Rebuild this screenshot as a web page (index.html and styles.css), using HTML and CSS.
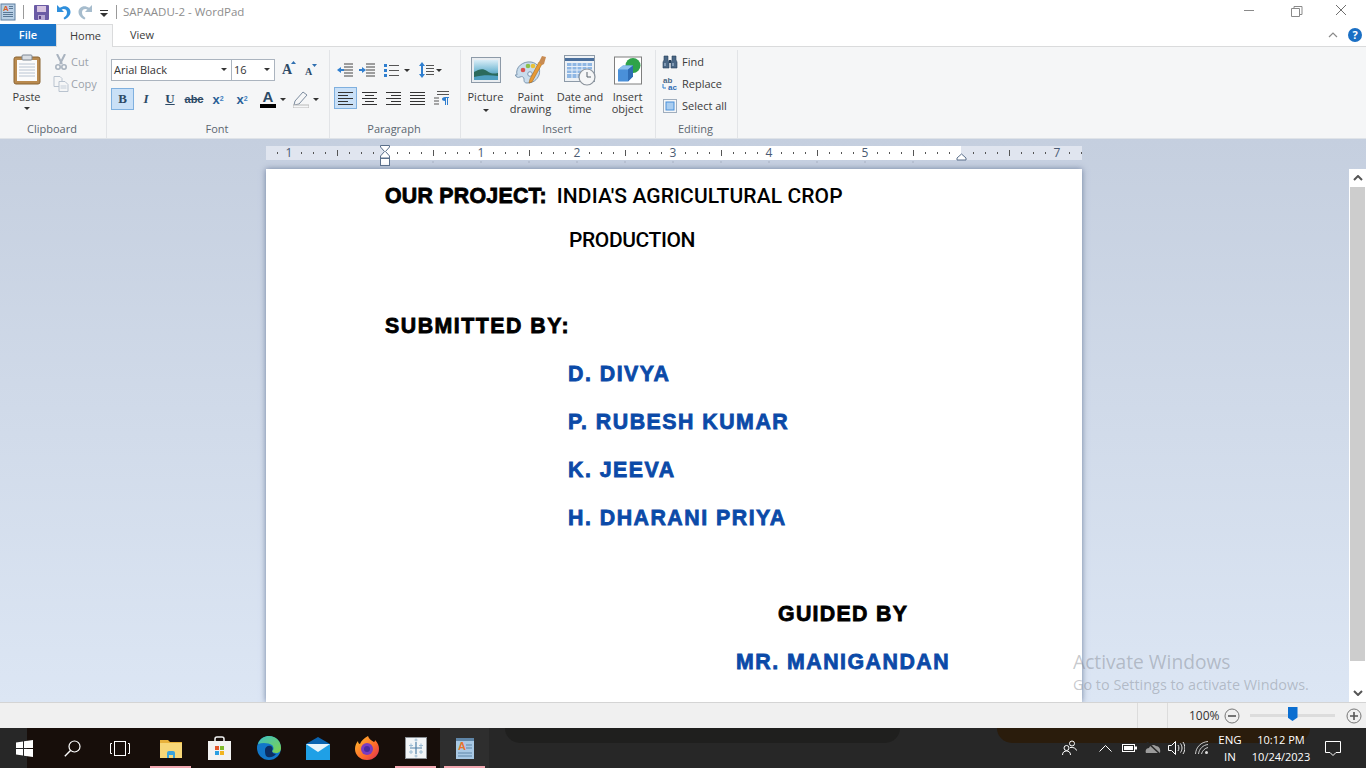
FILE: index.html
```html
<!DOCTYPE html>
<html lang="en">

<head>
    <meta charset="UTF-8">
    <meta name="viewport" content="width=device-width, initial-scale=1.0">
    <title>SAPAADU-2 - WordPad</title>
    <link rel="stylesheet" href="styles.css">
</head>

<body>
    <div class="app">
        <!-- title bar -->
        <header class="titlebar">
            <svg class="qa qa-app" width="16" height="18" viewBox="0 0 16 18">
                <rect x="1" y="1" width="14" height="16" fill="#b9d0e6" stroke="#5f7f9f"/>
                <rect x="3" y="9" width="10" height="1" fill="#5a7896"/>
                <rect x="3" y="11" width="10" height="1" fill="#5a7896"/>
                <rect x="3" y="13" width="10" height="1" fill="#5a7896"/>
                <text x="3" y="8" font-size="8" font-weight="700" fill="#d9622b" font-family="Liberation Sans">A</text>
                <rect x="9" y="3" width="4" height="1" fill="#5a7896"/>
                <rect x="9" y="5" width="4" height="1" fill="#5a7896"/>
            </svg>
            <span class="qa-sep qa-sep-first"></span>
            <svg class="qa qa-save" width="15" height="15" viewBox="0 0 15 15">
                <rect x="0" y="0" width="15" height="15" rx="1" fill="#6b5ba5"/>
                <rect x="3" y="1" width="9" height="6" fill="#d6c3e0"/>
                <rect x="4" y="10" width="7" height="5" fill="#b5a7d3"/>
                <rect x="5" y="11" width="2" height="3" fill="#5a4388"/>
            </svg>
            <svg class="qa qa-undo" width="15" height="16" viewBox="0 0 15 16">
                <path d="M1 1v7h7L5.600 5.600C7.800 4.300 11 5.300 11 8.500c0 2.500-1.500 4-3.500 5.500l1 1.500c3-1.500 6-4 6-7.500C14.500 3 9 .2 3.800 3.800z" fill="#2f8fdc"/>
            </svg>
            <svg class="qa qa-redo" width="15" height="16" viewBox="0 0 15 16">
                <path d="M14 1v7H7l2.400-2.400C7.200 4.300 4 5.300 4 8.500c0 2.500 1.500 4 3.500 5.500l-1 1.500c-3-1.500-6-4-6-7.500C.5 3 6 .2 11.200 3.800z" fill="#a6bccd"/>
            </svg>
            <svg class="qa qa-more" width="8" height="7" viewBox="0 0 8 7">
                <rect x="0" y="0" width="8" height="1" fill="#333"/>
                <path d="M0 3h8L4 7z" fill="#333"/>
            </svg>
            <span class="qa-sep qa-sep-last"></span>
            <span class="doc-title">SAPAADU-2 - WordPad</span>
            <div class="win-controls">
                <svg width="46" height="24" viewBox="0 0 46 24"><rect x="18" y="10" width="10" height="1" fill="#8a8a8a"/></svg>
                <svg width="46" height="24" viewBox="0 0 46 24"><path d="M19.500 8.500h8v8h-8zM22 8.500V6.500h8v8h-2.500" fill="none" stroke="#8a8a8a"/></svg>
                <svg width="46" height="24" viewBox="0 0 46 24"><path d="M18 5l10 10M28 5L18 15" stroke="#6f6f6f" fill="none"/></svg>
            </div>
        </header>

        <!-- tabs -->
        <nav class="tabs">
            <span class="tab tab-file">File</span>
            <span class="tab tab-home">Home</span>
            <span class="tab tab-view">View</span>
            <svg class="ribbon-collapse" width="10" height="6" viewBox="0 0 10 6"><path d="M1 5l4-4 4 4" fill="none" stroke="#8a8a8a" stroke-width="1.200"/></svg>
            <span class="help-btn">?</span>
        </nav>

        <!-- ribbon -->
        <section class="ribbon">
            <div class="group group-clipboard">
                <div class="group-body clipboard-body">
                    <div class="paste">
                        <svg width="28" height="31" viewBox="0 0 28 31">
                            <rect x="1" y="3" width="26" height="27" rx="2" fill="#b98a4f" stroke="#8a6433"/>
                            <rect x="4" y="6" width="20" height="21" fill="#fbfbfb"/>
                            <path d="M6 10h16M6 13h16M6 16h16M6 19h16M6 22h16" stroke="#b9c4d2"/>
                            <rect x="9" y="1" width="10" height="5" rx="1" fill="#d9dde2" stroke="#7d8793"/>
                        </svg>
                        <span class="paste-label">Paste</span>
                        <span class="caret"></span>
                    </div>
                    <div class="small-col">
                        <div class="small-row is-off">
                            <svg width="12" height="16" viewBox="0 0 12 16">
                                <path d="M2 0l5 10M10 0L5 10" stroke="#a9b3bf" stroke-width="2" fill="none"/>
                                <circle cx="3" cy="13" r="2.200" fill="none" stroke="#a9b3bf" stroke-width="1.600"/>
                                <circle cx="9" cy="13" r="2.200" fill="none" stroke="#a9b3bf" stroke-width="1.600"/>
                            </svg>
                            <span>Cut</span>
                        </div>
                        <div class="small-row is-off">
                            <svg width="15" height="16" viewBox="0 0 15 16">
                                <path d="M.5.500h6l2 2v8h-8z" fill="#f5f6f7" stroke="#b9c3cf"/>
                                <path d="M5.500 5.500h6l3 3v7h-9z" fill="#f5f6f7" stroke="#b9c3cf"/>
                                <path d="M7 10h6M7 12h6" stroke="#c5ced8"/>
                            </svg>
                            <span>Copy</span>
                        </div>
                    </div>
                </div>
                <div class="group-label">Clipboard</div>
            </div>

            <div class="group group-font">
                <div class="group-body font-body">
                    <div class="font-row">
                        <div class="combo combo-name"><span>Arial Black</span><span class="caret caret-right"></span></div>
                        <div class="combo combo-size"><span>16</span><span class="caret caret-right"></span></div>
                        <svg class="grow" width="17" height="20" viewBox="0 0 17 20">
                            <text x="1" y="16" font-size="14" font-weight="700" fill="#2d4a66" font-family="Liberation Serif">A</text>
                            <path d="M10 6l2.500-3 2.500 3z" fill="#2f6fb0"/>
                        </svg>
                        <svg class="shrink" width="14" height="18" viewBox="0 0 14 18">
                            <text x="1" y="15" font-size="10" font-weight="700" fill="#2d4a66" font-family="Liberation Serif">A</text>
                            <path d="M8 4h5l-2.500 3z" fill="#2f6fb0"/>
                        </svg>
                    </div>
                    <div class="font-row font-tools">
                        <span class="tool tool-first is-active fmt fmt-b">B</span>
                        <span class="tool fmt fmt-i">I</span>
                        <span class="tool fmt fmt-u">U</span>
                        <span class="tool fmt fmt-s">abc</span>
                        <span class="tool fmt fmt-sub">x<sub>2</sub></span>
                        <span class="tool fmt fmt-sup">x<sup>2</sup></span>
                        <span class="color-a"><span class="color-a-letter">A</span><span class="color-a-bar"></span></span>
                        <span class="caret caret-a"></span>
                        <svg class="pencil" width="16" height="17" viewBox="0 0 16 17">
                            <path d="M2 10l8-9 4 3-8 9-5 1z" fill="#f5f6f7" stroke="#7d8da0"/>
                            <rect x="0" y="14" width="16" height="3" fill="#f5f6f7" stroke="#b9b9b9"/>
                        </svg>
                        <span class="caret caret-h"></span>
                    </div>
                </div>
                <div class="group-label">Font</div>
            </div>

            <div class="group group-paragraph">
                <div class="group-body para-body">
                    <div class="para-row para-top">
                        <svg class="pi" width="16" height="14" viewBox="0 0 16 14"><path d="M7 1h9M7 4h9M7 7h9M7 10h9M7 13h9" stroke="#444"/><path d="M0 7l4-3v6z" fill="#2f7fd0"/><rect x="3" y="6" width="4" height="2" fill="#2f7fd0"/></svg>
                        <svg class="pi" width="16" height="14" viewBox="0 0 16 14"><path d="M7 1h9M7 4h9M7 7h9M7 10h9M7 13h9" stroke="#444"/><path d="M7 7L3 4v6z" fill="#2f7fd0"/><rect x="0" y="6" width="4" height="2" fill="#2f7fd0"/></svg>
                        <svg class="pi pi-list" width="15" height="13" viewBox="0 0 15 13"><rect y="0" width="3" height="3" fill="#2f7fd0"/><rect y="5" width="3" height="3" fill="#2f7fd0"/><rect y="10" width="3" height="3" fill="#2f7fd0"/><path d="M5 1.500h10M5 6.500h10M5 11.500h10" stroke="#555"/></svg>
                        <span class="caret caret-p1"></span>
                        <svg class="pi pi-space" width="15" height="16" viewBox="0 0 15 16"><path d="M3 0l3 4H0zM3 16l3-4H0z" fill="#2f7fd0"/><rect x="2" y="4" width="2" height="8" fill="#2f7fd0"/><path d="M7 3.500h8M7 6.500h8M7 9.500h8M7 12.500h8" stroke="#555"/></svg>
                        <span class="caret caret-p2"></span>
                    </div>
                    <div class="para-row para-bottom">
                        <span class="tool tool-first is-active"><svg width="15" height="13" viewBox="0 0 15 13"><path d="M0 .5h15M0 3.500h10M0 6.500h15M0 9.500h10M0 12.500h15" stroke="#333"/></svg></span>
                        <span class="tool"><svg width="15" height="13" viewBox="0 0 15 13"><path d="M0 .5h15M3 3.500h9M0 6.500h15M3 9.500h9M0 12.500h15" stroke="#333"/></svg></span>
                        <span class="tool"><svg width="15" height="13" viewBox="0 0 15 13"><path d="M0 .5h15M5 3.500h10M0 6.500h15M5 9.500h10M0 12.500h15" stroke="#333"/></svg></span>
                        <span class="tool"><svg width="15" height="13" viewBox="0 0 15 13"><path d="M0 .5h15M0 3.500h15M0 6.500h15M0 9.500h15M0 12.500h15" stroke="#333"/></svg></span>
                        <span class="tool"><svg width="15" height="14" viewBox="0 0 15 14"><path d="M3 .5h12M3 3.500h12M0 7h5M0 10h5M0 13h5" stroke="#555"/><path d="M7 6h8v1h-1v7h-1V7h-1v7h-1v-4c-2 0-3-1-3-2s1-2 3-2z" fill="#2f7fd0"/></svg></span>
                    </div>
                </div>
                <div class="group-label">Paragraph</div>
            </div>

            <div class="group group-insert">
                <div class="group-body insert-body">
                    <div class="large large-picture">
                        <svg width="30" height="31" viewBox="0 0 30 31">
                            <defs>
                                <linearGradient id="sky" x1="0" y1="0" x2="0" y2="1">
                                    <stop offset="0" stop-color="#d9edf7"/>
                                    <stop offset=".5" stop-color="#7fbfd8"/>
                                    <stop offset="1" stop-color="#2f7f9a"/>
                                </linearGradient>
                            </defs>
                            <rect x=".5" y="2.500" width="29" height="25" fill="#e9edf1" stroke="#8d9aa8"/>
                            <rect x="3" y="5" width="24" height="20" fill="url(#sky)"/>
                            <path d="M3 17c5-3 9-4 13-1s7 3 11 2v7H3z" fill="#2b6a5c"/>
                            <path d="M3 22c8-2 16-2 24-1v4H3z" fill="#4f9fc0"/>
                        </svg>
                        <span>Picture</span>
                        <span class="caret"></span>
                    </div>
                    <div class="large large-paint">
                        <svg width="32" height="31" viewBox="0 0 32 31">
                            <path d="M2 20C0 12 8 6 16 7c7 1 10 7 8 13-2 5-6 8-12 8-3 0-3-2-3-4s-2-3-4-2-4 0-5-2z" fill="#c9dcec" stroke="#7d97b0"/>
                            <circle cx="8" cy="15" r="2.300" fill="#d9534f"/>
                            <circle cx="13" cy="11" r="2.300" fill="#8cc04b"/>
                            <circle cx="18" cy="11" r="2.300" fill="#e8c23a"/>
                            <circle cx="15" cy="19" r="2.300" fill="#eef4fa" stroke="#7d97b0"/>
                            <path d="M14 28l3-1L27 9l-3-2-9 17z" fill="#e79a35" stroke="#a86a1f" stroke-width=".6"/>
                            <path d="M24 7l3-6 4 1-2 7-2 1z" fill="#c88b52"/>
                        </svg>
                        <span>Paint</span>
                        <span>drawing</span>
                    </div>
                    <div class="large large-date">
                        <svg width="32" height="31" viewBox="0 0 32 31">
                            <rect x=".5" y=".5" width="30" height="26" fill="#edf1f5" stroke="#8d9aa8"/>
                            <rect x="1" y="3" width="29" height="3" fill="#4a6f9c"/>
                            <rect x="3" y="8" width="25" height="15" fill="#8fb7e4"/>
                            <path d="M3 11.500h25M3 15h25M3 18.500h25M8 8v15M13 8v15M18 8v15M23 8v15" stroke="#e8f0f9"/>
                            <circle cx="23" cy="22" r="8" fill="#f5f6f7" stroke="#8a929b" stroke-width="1.200"/>
                            <path d="M23 17v5h4" fill="none" stroke="#59626c"/>
                        </svg>
                        <span>Date and</span>
                        <span>time</span>
                    </div>
                    <div class="large large-object">
                        <svg width="30" height="30" viewBox="0 0 30 30">
                            <rect x="1.500" y="1.500" width="27" height="27" fill="#fff" stroke="#7f7f7f"/>
                            <circle cx="20" cy="10" r="7.500" fill="#2fa34a"/>
                            <path d="M5 14l5-4h10v11l-5 5H5z" fill="#4a90d9"/>
                            <path d="M5 14l5-4h10l-5 4z" fill="#8cc0ee"/>
                            <path d="M15 14l5-4v11l-5 5z" fill="#2f6db5"/>
                        </svg>
                        <span>Insert</span>
                        <span>object</span>
                    </div>
                </div>
                <div class="group-label">Insert</div>
            </div>

            <div class="group group-editing">
                <div class="group-body small-col editing-body">
                    <div class="small-row">
                        <svg width="16" height="14" viewBox="0 0 16 14">
                            <path d="M2 1h4v4l1 2v6H1V7l1-2zM10 1h4v4l1 2v6H9V7l1-2z" fill="#4a6785" stroke="#27415c" stroke-width=".6"/>
                            <rect x="7" y="5" width="2" height="3" fill="#27415c"/>
                            <path d="M3 8v3M11 8v3" stroke="#b9cfe4"/>
                        </svg>
                        <span>Find</span>
                    </div>
                    <div class="small-row">
                        <svg class="rep" width="16" height="15" viewBox="0 0 16 15">
                            <text x="1" y="7" font-size="8" font-weight="700" fill="#4a6785" font-family="Liberation Sans">ab</text>
                            <text x="6" y="14" font-size="8" font-weight="700" fill="#2f6db5" font-family="Liberation Sans">ac</text>
                            <path d="M1 8v4h3" fill="none" stroke="#2f7fd0"/>
                        </svg>
                        <span>Replace</span>
                    </div>
                    <div class="small-row">
                        <svg width="14" height="14" viewBox="0 0 14 14">
                            <rect x=".5" y=".5" width="13" height="13" fill="none" stroke="#4a6785" stroke-dasharray="1 1"/>
                            <rect x="3" y="3" width="8" height="8" fill="#a9cdf0" stroke="#4a90d9"/>
                        </svg>
                        <span>Select all</span>
                    </div>
                </div>
                <div class="group-label">Editing</div>
            </div>
        </section>

        <!-- document area -->
        <main class="workspace">
            <div class="ruler">
                <svg width="816" height="14" viewBox="0 0 816 14">
                    <defs>
                        <pattern id="ticks" x="119" y="0" width="96" height="14" patternUnits="userSpaceOnUse">
                            <rect x="12" y="6" width="1" height="2" fill="#555"/>
                            <rect x="24" y="6" width="1" height="2" fill="#555"/>
                            <rect x="36" y="6" width="1" height="2" fill="#555"/>
                            <rect x="48" y="4" width="1" height="6" fill="#555"/>
                            <rect x="60" y="6" width="1" height="2" fill="#555"/>
                            <rect x="72" y="6" width="1" height="2" fill="#555"/>
                            <rect x="84" y="6" width="1" height="2" fill="#555"/>
                        </pattern>
                    </defs>
                    <rect width="816" height="14" fill="#e0e5ef"/>
                    <rect x="119" width="576" height="14" fill="#fff"/>
                    <rect width="816" height="14" fill="url(#ticks)"/>
                    <g class="ruler-num">
                        <text x="23" y="11">1</text>
                        <text x="215" y="11">1</text>
                        <text x="311" y="11">2</text>
                        <text x="407" y="11">3</text>
                        <text x="503" y="11">4</text>
                        <text x="599" y="11">5</text>
                        <text x="791" y="11">7</text>
                    </g>
                    <path d="M167 15v2M215 15v2M263 15v2M311 15v2M359 15v2M407 15v2M455 15v2M503 15v2M551 15v2M599 15v2M647 15v2" stroke="#a8b2c2"/>
                    <path d="M114.500-.5h9v1.500l-4 4.500 4 4.500v2h-9v-2l4-4.500-4-4.500z" fill="#fff" stroke="#5a6f8a"/>
                    <rect x="114.500" y="12.500" width="9" height="7" fill="#fff" stroke="#5a6f8a"/>
                    <path d="M695.500 8l4.500 4v2h-9v-2z" fill="#fff" stroke="#5a6f8a"/>
                </svg>
            </div>
            <div class="page">
                <div class="line line-first"><span class="heavy heavy-tight">OUR PROJECT:</span><span class="din din-first">INDIA'S AGRICULTURAL CROP</span></div>
                <div class="line line-second"><span class="din din-second">PRODUCTION</span></div>
                <div class="line line-submitted heavy">SUBMITTED BY:</div>
                <div class="line name heavy">D. DIVYA</div>
                <div class="line name heavy">P. RUBESH KUMAR</div>
                <div class="line name heavy">K. JEEVA</div>
                <div class="line name heavy">H. DHARANI PRIYA</div>
                <div class="line line-guided heavy">GUIDED BY</div>
                <div class="line line-guide heavy">MR. MANIGANDAN</div>
            </div>
            <aside class="scrollbar">
                <svg class="scroll-arrow" width="10" height="6" viewBox="0 0 10 6"><path d="M1 5l4-4 4 4" fill="none" stroke="#555" stroke-width="2"/></svg>
                <div class="scroll-thumb"></div>
                <svg class="scroll-arrow scroll-down" width="10" height="6" viewBox="0 0 10 6"><path d="M1 1l4 4 4-4" fill="none" stroke="#555" stroke-width="2"/></svg>
            </aside>
            <div class="watermark">
                <div class="wm-title">Activate Windows</div>
                <div class="wm-sub">Go to Settings to activate Windows.</div>
            </div>
        </main>

        <!-- status bar -->
        <footer class="statusbar">
            <span class="status-sep"></span>
            <span class="status-sep status-sep-2"></span>
            <span class="zoom-value">100%</span>
            <svg class="zoom-btn" width="16" height="16" viewBox="0 0 16 16"><circle cx="8" cy="8" r="7" fill="#f0f0f0" stroke="#777"/><path d="M4 8h8" stroke="#555" stroke-width="1.600"/></svg>
            <div class="zoom-track"><span class="zoom-thumb"></span></div>
            <svg class="zoom-btn zoom-plus" width="16" height="16" viewBox="0 0 16 16"><circle cx="8" cy="8" r="7" fill="#f0f0f0" stroke="#777"/><path d="M4 8h8M8 4v8" stroke="#555" stroke-width="1.600"/></svg>
        </footer>

        <!-- taskbar -->
        <footer class="taskbar">
            <span class="task task-sys">
                <svg width="17" height="17" viewBox="0 0 17 17"><path d="M0 2.500l7-1v6.500H0zM8 1.300L17 0v8H8zM0 9h7v6.500l-7-1zM8 9h9v8l-9-1.300z" fill="#fff"/></svg>
            </span>
            <span class="task task-sys">
                <svg width="17" height="17" viewBox="0 0 17 17"><circle cx="10.500" cy="6.500" r="5.500" fill="none" stroke="#fff" stroke-width="1.200"/><path d="M6.500 10.500L.8 16.200" stroke="#fff" stroke-width="1.400"/></svg>
            </span>
            <span class="task task-sys">
                <svg width="20" height="15" viewBox="0 0 20 15"><rect x="4.500" y=".5" width="11" height="14" fill="none" stroke="#fff"/><path d="M2 2.500H.5v10H2M18 2.500h1.500v10H18" fill="none" stroke="#fff"/></svg>
            </span>
            <span class="task task-first-app is-open">
                <svg width="22" height="19" viewBox="0 0 22 19">
                    <path d="M0 1h8l2 2h12v16H0z" fill="#e8b23c"/>
                    <rect x="0" y="4" width="22" height="15" fill="#f7d778"/>
                    <path d="M7 19v-5q0-2 2-2h4q2 0 2 2v5h-2v-3H9v3z" fill="#3aa3dc"/>
                    <rect x="9" y="12" width="4" height="3" fill="#3aa3dc"/>
                </svg>
            </span>
            <span class="task">
                <svg width="23" height="24" viewBox="0 0 23 24">
                    <path d="M7 7V3q0-2 2-2h5q2 0 2 2v4" fill="none" stroke="#f2f2f2" stroke-width="1.500"/>
                    <rect y="5" width="23" height="19" fill="#f2f2f2"/>
                    <rect x="7" y="10" width="4" height="4" fill="#e2552b"/>
                    <rect x="12" y="10" width="4" height="4" fill="#7fba2c"/>
                    <rect x="7" y="15" width="4" height="4" fill="#2b9fe2"/>
                    <rect x="12" y="15" width="4" height="4" fill="#f2b51f"/>
                </svg>
            </span>
            <span class="task">
                <svg width="24" height="24" viewBox="0 0 24 24">
                    <defs>
                        <linearGradient id="edgeA" x1="0" y1="0" x2="1" y2="1">
                            <stop offset="0" stop-color="#3ec1c4"/>
                            <stop offset="1" stop-color="#7ed24a"/>
                        </linearGradient>
                    </defs>
                    <circle cx="12" cy="12" r="12" fill="#1277c8"/>
                    <path d="M1 8C3 2 8 0 12 0c7 0 12 5 12 12 0 3-2 5-5 5-2 0-4-1-4-2 2-1 2-4 0-6-3-2-9-3-14-1z" fill="url(#edgeA)"/>
                    <path d="M8 14c0-3 3-5 6-4 2 1 2 3 1 5 0 2 2 3 4 3-3 4-8 4-10 2-1-2-1-4-1-6z" fill="#0c2f63"/>
                </svg>
            </span>
            <span class="task">
                <svg width="24" height="23" viewBox="0 0 24 23">
                    <path d="M0 7l12-7 12 7v4H0z" fill="#0a63b0"/>
                    <rect y="7" width="24" height="16" fill="#1fa0e6"/>
                    <path d="M0 7l12 8 12-8z" fill="#e8f4fb"/>
                </svg>
            </span>
            <span class="task">
                <svg width="24" height="24" viewBox="0 0 24 24">
                    <defs>
                        <linearGradient id="fox" x1="0" y1="0" x2="1" y2="1">
                            <stop offset="0" stop-color="#ffbf2b"/>
                            <stop offset=".6" stop-color="#ff6a2b"/>
                            <stop offset="1" stop-color="#d92b5a"/>
                        </linearGradient>
                    </defs>
                    <path d="M13 0c1 3 3 4 6 6 1-1 1-1 1-2 3 3 4 6 4 9 0 6-5 11-12 11S0 19 0 13c0-3 1-6 3-8 0 2 1 3 2 3 1-3 4-6 8-8z" fill="url(#fox)"/>
                    <circle cx="12" cy="13" r="6" fill="#7a3cc0"/>
                    <circle cx="12" cy="13" r="3" fill="#4a2aa0"/>
                </svg>
            </span>
            <span class="task is-open">
                <svg width="22" height="22" viewBox="0 0 22 22">
                    <rect x=".5" y=".5" width="21" height="21" fill="#f2f5f7" stroke="#8a8f94"/>
                    <path d="M11 5v12M5 11h12" stroke="#4f80a8" stroke-width="1.200"/>
                    <path d="M6 6.500v4M4 8.500h4M16 6.500v4M14 8.500h4M6 13v4M4 15h4M16 13v4M14 15h4M11 1.500v3M9.500 3h3M11 17.500v3M9.500 19h3" stroke="#9bbcd4"/>
                </svg>
            </span>
            <span class="task is-open is-active-app">
                <svg width="18" height="21" viewBox="0 0 18 21">
                    <rect width="18" height="21" fill="#a8c8e4"/>
                    <rect y="0" width="18" height="3" fill="#5f86a8"/>
                    <text x="2" y="12" font-size="11" font-weight="700" fill="#e8742b" font-family="Liberation Sans">A</text>
                    <path d="M10 7h6M10 10h6M2 15h14M2 18h14" stroke="#5f86a8"/>
                </svg>
            </span>
            <div class="tray">
                <svg class="tray-people" width="15" height="16" viewBox="0 0 15 16"><circle cx="10" cy="3.500" r="2.500" fill="none" stroke="#fff"/><circle cx="4.500" cy="8" r="2.500" fill="none" stroke="#fff"/><path d="M.5 15c0-3 2-4 4-4s4 1 4 4M8 7.500c3-.5 6 .5 6.500 3" fill="none" stroke="#fff"/></svg>
                <svg class="tray-caret" width="13" height="7" viewBox="0 0 13 7"><path d="M.5 6.500l6-6 6 6" fill="none" stroke="#fff"/></svg>
                <svg class="tray-battery" width="15" height="8" viewBox="0 0 15 8"><rect x=".5" y=".5" width="12" height="7" fill="none" stroke="#fff"/><rect x="2" y="2" width="9" height="4" fill="#fff"/><rect x="13" y="2.500" width="2" height="3" fill="#fff"/></svg>
                <svg class="tray-cloud" width="16" height="12" viewBox="0 0 16 12"><path d="M1 11c-1-2 0-5 3-5 1-3 5-4 7-2 3 0 5 3 4 7z" fill="#9b9b9b"/><path d="M2 0l13 12" stroke="#272727" stroke-width="1.500"/></svg>
                <svg class="tray-sound" width="17" height="14" viewBox="0 0 17 14"><path d="M.5 4.500h3l4-4v13l-4-4h-3z" fill="none" stroke="#fff"/><path d="M10 4c1.200 2 1.200 4 0 6M12.500 2.500c2 3 2 6 0 9M15 1c2.500 4 2.500 8 0 12" fill="none" stroke="#fff" stroke-width=".9"/></svg>
                <svg class="tray-wifi" width="14" height="14" viewBox="0 0 14 14"><path d="M.5 13C1 6 6 1 13 .5M3.500 13C4 8 8 4 13 3.500M6.500 13C7 10 10 7 13 6.500" fill="none" stroke="#ddd" stroke-width=".9"/><circle cx="11.500" cy="11.500" r="1.500" fill="#ddd"/></svg>
                <div class="lang"><span>ENG</span><span>IN</span></div>
                <div class="clock"><span>10:12 PM</span><span>10/24/2023</span></div>
                <svg class="tray-notify" width="16" height="15" viewBox="0 0 16 15"><path d="M.5.500h15v11H11l-3 3-3-3H.5z" fill="none" stroke="#fff"/></svg>
            </div>
        </footer>
    </div>
</body>

</html>
```

FILE: styles.css
```css
/* page */
html,
body {
    margin: 0;
    height: 100%;
    overflow: hidden;
}

body {
    font-family: "Open Sans", "Noto Sans", Arial, sans-serif;
    font-size: 11px;
    color: #3b3b3b;
}

.app {
    width: 1366px;
    height: 768px;
    display: flex;
    flex-direction: column;
}

/* title bar */
.titlebar {
    height: 24px;
    background: #fff;
    display: flex;
    align-items: center;
}

.qa {
    display: block;
    flex: none;
}

.qa-sep {
    width: 1px;
    height: 14px;
    background: #9a9a9a;
    flex: none;
}

.qa-sep-first {
    margin-left: 7px;
}

.qa-save {
    margin-left: 10px;
}

.qa-undo {
    margin-left: 7px;
}

.qa-redo {
    margin-left: 7px;
}

.qa-more {
    margin-left: 7px;
    margin-top: 3px;
}

.qa-sep-last {
    margin-left: 8px;
}

.doc-title {
    margin-left: 6px;
    padding-bottom: 2px;
    font-size: 11.500px;
    color: #8d8d8d;
}

.win-controls {
    margin-left: auto;
    margin-right: 2px;
    display: flex;
    height: 24px;
}

/* tabs */
.tabs {
    height: 22px;
    background: #fff;
    display: flex;
    align-items: stretch;
    border-bottom: 1px solid #dadbdc;
    box-sizing: content-box;
}

.tab {
    display: flex;
    align-items: center;
    justify-content: center;
    font-size: 11px;
    padding-bottom: 1px;
    box-sizing: border-box;
}

.tab-file {
    width: 56px;
    background: #1a75c8;
    color: #fff;
    font-weight: 600;
}

.tab-home {
    width: 57px;
    padding-left: 2px;
    background: #f5f6f7;
    border: 1px solid #dadbdc;
    border-bottom: none;
    margin-bottom: -1px;
}

.tab-view {
    width: 56px;
    padding-left: 2px;
}

.ribbon-collapse {
    margin-left: auto;
    align-self: center;
}

.help-btn {
    width: 14px;
    height: 14px;
    margin: 4px 4px 0 10px;
    border-radius: 50%;
    background: #1a6fc4;
    color: #fff;
    font-size: 11px;
    font-weight: 700;
    line-height: 14px;
    text-align: center;
}

/* ribbon */
.ribbon {
    height: 91px;
    background: #f5f6f7;
    border-bottom: 1px solid #dfe3e8;
    display: flex;
}

.group {
    display: flex;
    flex-direction: column;
    border-right: 1px solid #e2e4e7;
    margin-top: 3px;
    box-sizing: border-box;
}

.group-clipboard {
    width: 107px;
}

.group-font {
    width: 223px;
}

.group-paragraph {
    width: 131px;
}

.group-insert {
    width: 195px;
}

.group-editing {
    width: 82px;
}

.group-body {
    height: 71px;
}

.group-label {
    height: 17px;
    padding-right: 2px;
    text-align: center;
    color: #5c6670;
    font-size: 11px;
    line-height: 15px;
}

.caret {
    display: inline-block;
    width: 0;
    height: 0;
    border-left: 3px solid transparent;
    border-right: 3px solid transparent;
    border-top: 3px solid #333;
}

/* clipboard */
.clipboard-body {
    display: flex;
}

.paste {
    width: 53px;
    display: flex;
    flex-direction: column;
    align-items: center;
    padding-top: 4px;
}

.paste-label {
    margin-top: 4px;
    line-height: 15px;
}

.paste .caret {
    margin-top: 3px;
}

.small-col {
    display: flex;
    flex-direction: column;
    padding-top: 1px;
    box-sizing: border-box;
}

.small-row {
    height: 22px;
    display: flex;
    align-items: center;
    gap: 5px;
    padding-bottom: 1px;
    box-sizing: border-box;
}

.small-row svg {
    width: 16px;
}

.small-row.is-off {
    color: #9ba2aa;
    gap: 2px;
}

/* font */
.font-body {
    padding: 9px 0 0 4px;
    box-sizing: border-box;
}

.font-row {
    display: flex;
    align-items: center;
    height: 22px;
}

.font-tools {
    margin-top: 7px;
}

.combo {
    height: 22px;
    box-sizing: border-box;
    background: #fff;
    border: 1px solid #abb4bf;
    display: flex;
    align-items: center;
    justify-content: space-between;
    padding: 0 3px 1px 2px;
    color: #333;
}

.combo-name {
    width: 121px;
}

.combo-size {
    width: 44px;
    margin-left: -1px;
}

.caret-right {
    margin-right: 1px;
}

.grow {
    margin-left: 6px;
    margin-top: -4px;
}

.shrink {
    margin-left: 6px;
    margin-top: -3px;
}

.tool {
    width: 24px;
    height: 22px;
    box-sizing: border-box;
    display: flex;
    align-items: center;
    justify-content: center;
    flex: none;
}

.tool-first {
    width: 23px;
}

.is-active {
    background: #c9e0f7;
    border: 1px solid #7fb0df;
}

.fmt {
    font-family: "Liberation Serif", serif;
    color: #2d4a66;
    font-weight: 700;
    font-size: 13px;
}

.fmt-i {
    font-style: italic;
}

.fmt-u {
    text-decoration: underline;
}

.fmt-s {
    text-decoration: line-through;
    font-family: "Liberation Sans", sans-serif;
    font-size: 11px;
}

.fmt-sub,
.fmt-sup {
    font-family: "Liberation Sans", sans-serif;
    color: #2a5f96;
}

.fmt sub,
.fmt sup {
    font-size: 7px;
    color: #3f7fbf;
    line-height: 0;
}

.color-a {
    width: 16px;
    margin-left: 6px;
    display: flex;
    flex-direction: column;
    align-items: center;
}

.color-a-letter {
    font-family: "Liberation Sans", sans-serif;
    font-size: 15px;
    font-weight: 700;
    line-height: 14px;
    color: #2d4a66;
}

.color-a-bar {
    width: 16px;
    height: 4px;
    background: #000;
}

.caret-a {
    margin-left: 4px;
}

.pencil {
    margin-left: 7px;
}

.caret-h {
    margin-left: 4px;
}

/* paragraph */
.para-body {
    padding: 9px 0 0 4px;
    box-sizing: border-box;
}

.para-row {
    display: flex;
    align-items: center;
    height: 22px;
}

.para-top {
    padding-left: 3px;
}

.para-bottom {
    margin-top: 6px;
}

.pi {
    flex: none;
    margin-right: 6px;
}

.pi-list {
    margin-left: 3px;
    margin-right: 5px;
}

.caret-p1 {
    margin-right: 9px;
}

.pi-space {
    margin-right: 2px;
}

/* insert */
.insert-body {
    display: flex;
    padding: 5px 0 0 4px;
    box-sizing: border-box;
}

.large {
    display: flex;
    flex-direction: column;
    align-items: center;
    line-height: 12px;
    height: 66px;
    color: #3b3b3b;
}

.large svg {
    height: 31px;
    margin-bottom: 5px;
    flex: none;
}

.large .caret {
    margin-top: 6px;
}

.large-picture {
    width: 41px;
}

.large-paint {
    width: 49px;
}

.large-date {
    width: 50px;
}

.large-object {
    width: 45px;
}

/* editing */
.editing-body {
    padding-left: 6px;
}

.editing-body .small-row {
    gap: 4px;
}

/* document area */
.workspace {
    flex: 1;
    min-height: 0;
    position: relative;
    overflow: hidden;
    background: linear-gradient(#c5cfdf, #dce6f4);
    display: flex;
    flex-direction: column;
}

.ruler {
    margin: 7px 0 0 266px;
    width: 816px;
    height: 14px;
    flex: none;
}

.ruler svg {
    display: block;
    overflow: visible;
}

.ruler-num text {
    font-family: "Open Sans", sans-serif;
    font-size: 12px;
    fill: #4a5a72;
    text-anchor: middle;
}

.page {
    margin: 9px 0 0 266px;
    width: 816px;
    flex: 1;
    min-height: 0;
    box-sizing: border-box;
    padding-left: 119px;
    background: #fff;
    box-shadow: 0 0 6px #6f7f9e;
    color: #000;
}

.line {
    height: 48px;
    line-height: 48px;
    white-space: nowrap;
}

.heavy {
    font-family: "Liberation Sans", Arial, sans-serif;
    font-size: 21.330px;
    font-weight: 700;
    letter-spacing: 1.500px;
    -webkit-text-stroke: .8px currentColor;
}

.heavy-tight {
    letter-spacing: .25px;
}

.din {
    font-family: Roboto, "Liberation Sans", sans-serif;
    font-size: 21px;
    font-weight: 500;
    letter-spacing: .1px;
}

.din-first {
    margin-left: 10px;
}

.din-second {
    letter-spacing: -.4px;
}

.line-first {
    height: 44px;
    line-height: 44px;
    margin-top: 5px;
}

.line-second {
    height: 44px;
    line-height: 44px;
    padding-left: 184px;
}

.line-submitted {
    margin-top: 40px;
}

.name {
    color: #0b4aa8;
    padding-left: 183px;
}

.line-guided {
    margin-top: 48px;
    padding-left: 393px;
    letter-spacing: 1.300px;
}

.line-guide {
    color: #0b4aa8;
    padding-left: 351px;
}

.scrollbar {
    position: absolute;
    right: 0;
    top: 30px;
    bottom: 0;
    width: 17px;
    background: #fff;
    display: flex;
    flex-direction: column;
    align-items: center;
}

.scroll-arrow {
    margin-top: 6px;
    flex: none;
}

.scroll-thumb {
    width: 15px;
    height: 474px;
    margin-top: 6px;
    background: #cdcdcd;
}

.scroll-down {
    margin-top: auto;
    margin-bottom: 6px;
}

.watermark {
    position: absolute;
    left: 1073px;
    top: 510px;
    color: rgba(120, 125, 135, .42);
    pointer-events: none;
}

.wm-title {
    font-size: 19.200px;
    line-height: 26px;
}

.wm-sub {
    font-size: 14.400px;
    line-height: 20px;
}

/* status bar */
.statusbar {
    height: 26px;
    box-sizing: border-box;
    background: #f0f0f0;
    border-top: 1px solid #d4d4d4;
    display: flex;
    align-items: center;
    padding-left: 1137px;
    color: #333;
}

.status-sep {
    width: 1px;
    height: 25px;
    background: #dcdcdc;
}

.status-sep-2 {
    margin-left: 29px;
}

.zoom-value {
    margin-left: 21px;
    font-size: 12px;
}

.zoom-btn {
    margin-left: 4px;
    flex: none;
}

.zoom-track {
    width: 85px;
    height: 3px;
    margin-left: 10px;
    background: #dcdcdc;
    position: relative;
}

.zoom-thumb {
    position: absolute;
    left: 38px;
    top: -7px;
    width: 10px;
    height: 14px;
    background: #0a6ed1;
    clip-path: polygon(0 0, 100% 0, 100% 75%, 50% 100%, 0 75%);
}

.zoom-plus {
    margin-left: 11px;
}

/* taskbar */
.taskbar {
    height: 40px;
    display: flex;
    align-items: center;
    color: #fff;
    isolation: isolate;
    position: relative;
    background-color: #272727;
    background-image:
        linear-gradient(#170e0a, #170e0a),
        linear-gradient(#141a2c, #141a2c),
        linear-gradient(#141a2c, #141a2c);
    background-repeat: no-repeat;
    background-size: 416px 40px, 30px 15px, 14px 15px;
    background-position: 27px 0, 685px 0, 775px 0;
}

/* wallpaper showing through the taskbar */
.taskbar::before {
    content: "";
    position: absolute;
    z-index: -1;
    left: 505px;
    top: 0;
    width: 395px;
    height: 15px;
    background: #1f1f1e;
    border-radius: 0 0 28px 28px;
}

.taskbar::after {
    content: "";
    position: absolute;
    z-index: -1;
    left: 997px;
    top: 0;
    width: 313px;
    height: 15px;
    background: #2a1c0c;
    border-radius: 0 0 20px 20px;
}

.task {
    width: 49px;
    height: 40px;
    flex: none;
    display: flex;
    align-items: center;
    justify-content: center;
    box-sizing: border-box;
    position: relative;
}

.task-sys {
    width: 48px;
}

.task-first-app {
    margin-left: 2px;
}

.is-open::after {
    content: "";
    position: absolute;
    left: 4px;
    right: 4px;
    bottom: 0;
    height: 2px;
    background: #f2a7b0;
}

.is-active-app {
    background: #2e2e2e;
}

.tray {
    margin-left: auto;
    height: 40px;
    display: flex;
    align-items: center;
    flex: none;
}

.tray svg {
    flex: none;
}

.tray-caret {
    margin-left: 22px;
}

.tray-battery {
    margin-left: 10px;
}

.tray-cloud {
    margin-left: 8px;
}

.tray-sound {
    margin-left: 7px;
}

.tray-wifi {
    margin-left: 10px;
}

.lang {
    margin-left: 6px;
    width: 30px;
    display: flex;
    flex-direction: column;
    align-items: center;
    font-size: 11.500px;
    line-height: 17px;
}

.clock {
    margin-left: 1px;
    width: 70px;
    display: flex;
    flex-direction: column;
    align-items: center;
    font-size: 11px;
    line-height: 17px;
}

.tray-notify {
    margin: 0 25px 0 9px;
}
```
